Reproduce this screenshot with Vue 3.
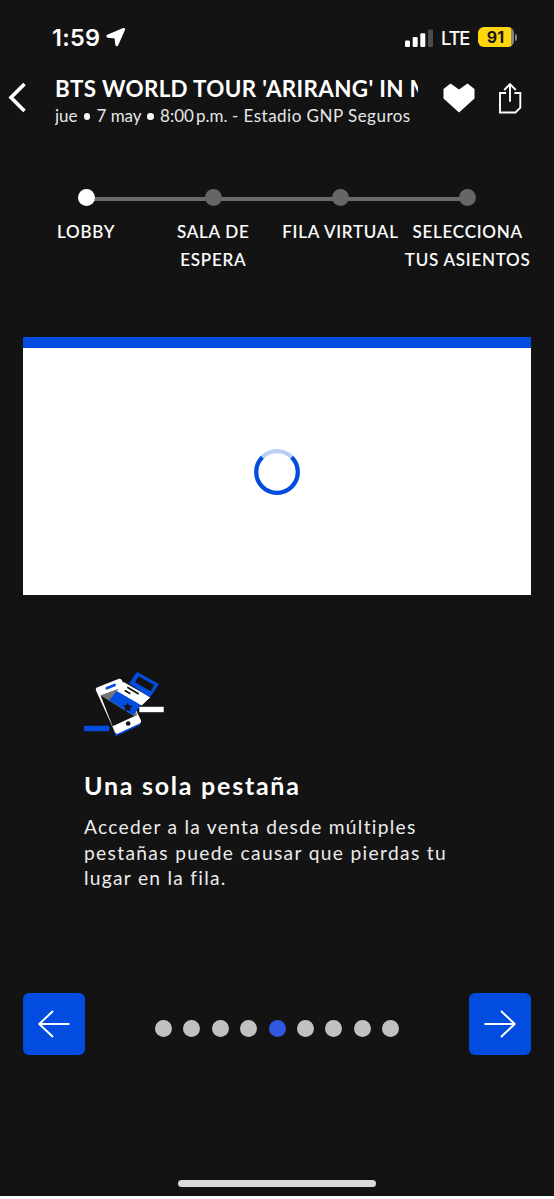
<script setup>
const steps = [
  { lines: ['LOBBY'], active: true },
  { lines: ['SALA DE', 'ESPERA'] },
  { lines: ['FILA VIRTUAL'] },
  { lines: ['SELECCIONA', 'TUS ASIENTOS'] },
]
const slides = 9
const current = 5
</script>

<template>
  <main class="screen">
    <div class="status">
      <span class="time">1:59</span>
      <svg class="loc" width="20" height="20" viewBox="0 0 20 20"><path d="M17.6 1.8 1.6 8.6Q1 9.3 1.8 9.8L9.4 10.6 10.2 17.8Q10.8 18.8 11.4 17.9L18.2 2.4Q18.3 1.7 17.6 1.8Z" fill="#fff" stroke="#fff" stroke-width="1.8" stroke-linejoin="round" /></svg>
      <svg class="signal" width="28" height="19" viewBox="0 0 28 19">
        <rect x="0" y="11.5" width="5" height="6.5" rx="1.3" fill="#fff" />
        <rect x="7.7" y="8" width="5" height="10" rx="1.3" fill="#fff" />
        <rect x="15.3" y="4.2" width="5" height="13.8" rx="1.3" fill="#fff" />
        <rect x="23" y=".4" width="5" height="17.6" rx="1.3" fill="#4b4b4b" />
      </svg>
      <span class="lte">LTE</span>
      <span class="battery"><b>91</b></span>
      <i class="nub"></i>
    </div>

    <header class="event">
      <svg class="back" width="18" height="32" viewBox="0 0 18 32"><path d="M16.5 3 3 16.5 16.5 30" fill="none" stroke="#fff" stroke-width="3.6" /></svg>
      <div class="info">
        <div class="title">BTS WORLD TOUR 'ARIRANG' IN M</div>
        <div class="sub">jue <i></i> 7 may <i></i> 8:00&#8201;p.m. <span>- Estadio GNP Seguros</span></div>
      </div>
      <svg class="heart" width="32" height="30" viewBox="0 0 32 30"><path d="M7.5.5 16 6.5 24.5.5 31.5 6V15.5L16 29.5.5 15.5V6Z" fill="#fff" /></svg>
      <svg class="share" width="24" height="32" viewBox="0 0 24 32"><path d="M8 11H2V30.5H17.5L22.3 25.7V11H16.4M12 19.7V2.5M6.2 8 12 2.1 17.8 8" fill="none" stroke="#fff" stroke-width="1.9" /></svg>
    </header>

    <ol class="steps">
      <li v-for="(s, i) in steps" :key="i" :class="['step', { active: s.active }]">
        <span class="dot"></span>
        <span v-for="l in s.lines" :key="l" class="label">{{ l }}</span>
      </li>
    </ol>

    <section class="card">
      <svg width="46" height="46" viewBox="0 0 46 46" fill="none" stroke-width="4.2">
        <circle cx="23" cy="23" r="20.8" stroke="#b9cff3" />
        <path d="M37.7 8.3A20.8 20.8 0 1 1 8.3 8.3" stroke="#024ddf" />
      </svg>
    </section>

    <article class="tip">
      <svg class="art" width="82" height="66" viewBox="0 0 82 66">
        <path d="M29 57 32 62 56.5 51 56 53 33 63.8Q31.8 64.2 31.2 63Z" fill="#024ddf" />
        <path d="M12 18.6Q11.2 16.2 13.5 15.2L35 6.8Q37 6.2 38 8.5L57 48.5Q57.6 50.5 55.7 51.5L34 61.6Q32 62.4 31 60.3Z" fill="#fff" />
        <path d="M16.6 23.6 39 15.5 53 42.9 28.6 54.3Z" fill="#131313" />
        <path d="M16.6 23.6 34 17.3 50 33 53 42.9 50 44Z" fill="#777" />
        <path d="M22.7 16.3 30.7 13" stroke="#024ddf" stroke-width="2.6" stroke-linecap="round" />
        <circle cx="44.2" cy="51.5" r="2.3" fill="#131313" />
        <path d="M33 18.5 57 32.5 49.3 43.2 25.2 28.2Z" fill="#024ddf" />
        <path d="M39.6 10 66.3 25.2 57.7 33.4 32.8 19Z" fill="#fff" />
        <path d="M43.3 15.2 54.7 22M40.7 18.6 46.3 21.8" stroke="#131313" stroke-width="1.7" />
        <path d="M53 0 75 12 66 25.5 45 11.4Z" fill="#024ddf" />
        <path d="M54.5 4.2 70.2 13 66.8 19.2 51 10.3Z" fill="#131313" />
        <path d="M43.6 30.4 45 33.5 48.7 33.7 46 36.2 47 39.6 43.8 37.8 40.6 39.3 41.4 35.8 39.2 33.2 42.5 33.2Z" fill="#131313" />
        <rect x="55.3" y="34.8" width="24.4" height="5.4" fill="#fff" />
        <rect y="53.7" width="25.3" height="5.5" fill="#024ddf" />
      </svg>
      <h1>Una sola pestaña</h1>
      <p>
        <span class="l1">Acceder a la venta desde múltiples</span><br />
        <span class="l2">pestañas puede causar que pierdas tu</span><br />
        <span class="l3">lugar en la fila.</span>
      </p>
    </article>

    <nav class="pager">
      <button><svg width="34" height="30" viewBox="0 0 34 30"><path d="M32.5 15H2M16 2 2.3 15 16 28" fill="none" stroke="#fff" stroke-width="2" stroke-linejoin="round" /></svg></button>
      <div class="dots"><i v-for="n in slides" :key="n" :class="{ on: n === current }"></i></div>
      <button><svg width="34" height="30" viewBox="0 0 34 30"><path d="M1.5 15H32M18 2 31.7 15 18 28" fill="none" stroke="#fff" stroke-width="2" stroke-linejoin="round" /></svg></button>
    </nav>
    <div class="home"></div>
  </main>
</template>

<style>
body { background: #fdfdfd; }
</style>

<style scoped>
.screen { box-sizing: border-box; width: 554px; height: 1196px; overflow: hidden; background: #131313; color: #fff; font-family: Lato, "Noto Sans", sans-serif; }
.status { display: flex; align-items: center; height: 76px; box-sizing: border-box; padding-left: 52px; font-family: Inter, sans-serif; }
.time { width: 54px; font-size: 23.5px; font-weight: 600; letter-spacing: 0.3px; line-height: 30px; white-space: nowrap; }
.loc { margin-top: -2px; }
.signal { margin-left: 279px; }
.lte { width: 37px; margin-left: 8px; font-size: 18.5px; font-weight: 500; line-height: 24px; letter-spacing: -1.3px; }
.battery { display: flex; align-items: center; justify-content: center; width: 36px; height: 20px; margin-top: -2px; border-radius: 6px; background: linear-gradient(90deg, #ffd60a 32.5px, #858585 32.5px); color: #161616; }
.battery b { font-size: 16px; font-weight: 700; line-height: 20px; margin-right: 1px; }
.nub { width: 2px; height: 7px; margin: -2px 0 0 1px; border-radius: 0 2px 2px 0; background: #858585; }

.event { display: flex; align-items: flex-start; height: 78px; }
.back { margin: 5px 0 0 8px; }
.info { width: 363px; margin-left: 29px; overflow: hidden; white-space: nowrap; }
.title { font-size: 22.4px; font-weight: 700; line-height: 26px; letter-spacing: 0.34px; }
.sub { font-size: 17px; font-weight: 400; line-height: 26px; margin-top: 1px; color: #e6e6e6; }
.sub i { display: inline-block; width: 6.4px; height: 6.4px; margin: 0 1.9px 2.5px; border-radius: 50%; background: #f4f4f4; }
.sub span { letter-spacing: 0.48px; }
.heart { margin: 7px 0 0 25px; }
.share { margin: 6px 0 0 23px; }

.steps { display: grid; grid-template-columns: repeat(4, 127.2px); height: 148px; margin: 35px 0 0 22.5px; padding: 0; list-style: none; }
.step { position: relative; display: flex; flex-direction: column; align-items: center; }
.step:not(:last-child)::before { content: ""; position: absolute; top: 8px; left: 50%; width: 100%; height: 4px; background: #6b6b6b; }
.dot { position: relative; flex: none; width: 17px; height: 17px; margin-bottom: 12px; border-radius: 50%; background: #666; }
.active .dot { background: #fff; }
.label { font-size: 17px; font-weight: 500; line-height: 28px; letter-spacing: 0.76px; white-space: nowrap; -webkit-text-stroke: 0.12px #fff; }

.card { display: flex; align-items: center; justify-content: center; box-sizing: border-box; width: 508px; height: 258px; margin: 0 0 0 23px; border-top: 11px solid #024ddf; background: #fff; }

.tip { height: 398px; padding: 77px 0 0 84px; box-sizing: border-box; }
.art { display: block; overflow: visible; }
h1 { margin: 30px 0 0; font-size: 25px; font-weight: 700; line-height: 34px; letter-spacing: 1.75px; }
p { margin: 12px 0 0; color: #ececec; font-size: 19.2px; line-height: 25.6px; letter-spacing: 1.28px; white-space: nowrap; }
.l2 { letter-spacing: 1.34px; }

.pager { display: flex; justify-content: space-between; width: 508px; height: 62px; margin-left: 23px; }
button { display: flex; align-items: center; justify-content: center; width: 62px; height: 62px; padding: 0; border: 0; border-radius: 6px; background: #024ddf; }
.dots { display: flex; align-items: center; gap: 11.4px; padding-top: 8px; }
.dots i { width: 17px; height: 17px; border-radius: 50%; background: #c1c1c1; }
.dots i.on { background: #3156df; }
.home { width: 198px; height: 7px; margin: 125px 0 0 178px; border-radius: 4px; background: #dadada; }
</style>
